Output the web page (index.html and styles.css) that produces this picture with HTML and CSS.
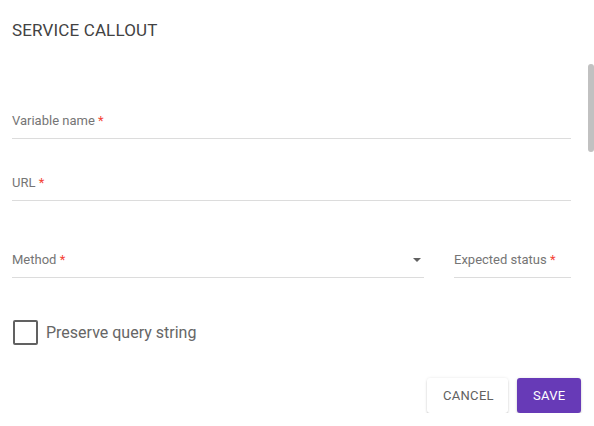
FILE: index.html
```html
<!DOCTYPE html>
<html>
<head>
<meta charset="utf-8">
<link rel="stylesheet" href="styles.css">
</head>
<body>
<div class="dialog">
  <h1 class="title">SERVICE CALLOUT</h1>
  <div class="fields">
    <div class="field field-first">
      <div class="label">Variable name <span class="req">*</span></div>
    </div>
    <div class="field field-second">
      <div class="label">URL <span class="req">*</span></div>
    </div>
    <div class="row">
      <div class="field select">
        <div class="label">Method <span class="req">*</span></div>
        <span class="arrow"></span>
      </div>
      <div class="field status">
        <div class="label">Expected status <span class="req">*</span></div>
      </div>
    </div>
    <label class="check">
      <span class="box"></span>
      <span class="check-text">Preserve query string</span>
    </label>
  </div>
  <div class="actions">
    <button class="btn btn-cancel">CANCEL</button>
    <button class="btn btn-save">SAVE</button>
  </div>
</div>
<div class="scroll-thumb"></div>
</body>
</html>
```

FILE: styles.css
```css
html, body {
  margin: 0;
  padding: 0;
  background: #ffffff;
  font-family: Roboto, "Liberation Sans", Arial, sans-serif;
}

.dialog {
  padding: 18px 13px 0 12px;
}

.title {
  margin: 0;
  font-size: 17px;
  font-weight: 400;
  line-height: 24px;
  color: #424242;
  letter-spacing: 0.15px;
}

.fields {
  padding-right: 10px;
}

.field {
  border-bottom: 1px solid #dcdcdc;
  padding-top: 1px;
  padding-bottom: 9px;
}

.field-first {
  margin-top: 70px;
}

.field-second {
  margin-top: 35px;
}

.label {
  font-size: 13px;
  line-height: 16px;
  color: #757575;
}

.req {
  color: #f44336;
}

.row {
  display: flex;
  gap: 30px;
  margin-top: 50px;
}

.select {
  flex: 1;
  position: relative;
}

.arrow {
  position: absolute;
  right: 3px;
  top: 7px;
  width: 0;
  height: 0;
  border-left: 4px solid transparent;
  border-right: 4px solid transparent;
  border-top: 4px solid #616161;
}

.status {
  width: 117px;
}

.check {
  display: flex;
  align-items: center;
  gap: 8px;
  margin-top: 42px;
  height: 25px;
}

.box {
  box-sizing: border-box;
  width: 25px;
  height: 25px;
  margin-left: 1px;
  border: 2px solid #616161;
  border-radius: 2px;
}

.check-text {
  font-size: 16px;
  color: #666666;
}

.actions {
  display: flex;
  justify-content: flex-end;
  gap: 9px;
  margin-top: 33px;
}

.btn {
  height: 35px;
  border: none;
  border-radius: 3px;
  font-family: Roboto, "Liberation Sans", Arial, sans-serif;
  font-size: 13px;
  letter-spacing: 0.3px;
  padding: 0 16px;
  cursor: pointer;
}

.btn-cancel {
  width: 81px;
  background: #ffffff;
  color: #616161;
  box-shadow: 0 2px 2px rgba(0, 0, 0, 0.16), 0 0 3px rgba(0, 0, 0, 0.1);
}

.btn-save {
  width: 64px;
  background: #673ab7;
  color: #ffffff;
  box-shadow: 0 2px 2px rgba(0, 0, 0, 0.16), 0 0 3px rgba(0, 0, 0, 0.1);
}

.scroll-thumb {
  position: absolute;
  left: 588px;
  top: 64px;
  width: 6px;
  height: 88px;
  border-radius: 3px;
  background: #c1c1c1;
}
```
